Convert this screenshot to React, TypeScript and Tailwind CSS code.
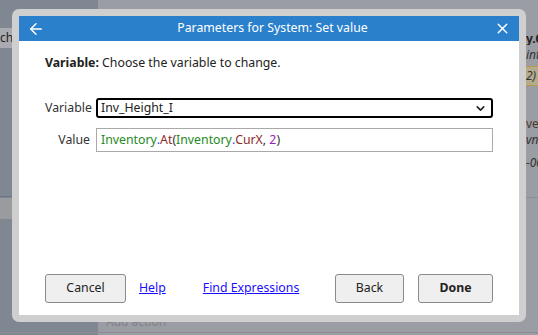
import { ArrowLeft, X, ChevronDown } from 'lucide-react';

const font = { fontFamily: '"Noto Sans", "Segoe UI", sans-serif' };

const Backdrop = () => (
  <div className="absolute inset-0 bg-[#9b9da4]">
    <div className="absolute left-0 top-0 w-[98px] h-full bg-[#7e8792]" />
    <div className="absolute left-0 top-[196px] w-[98px] h-px bg-[#6f7680]" />
    <div className="absolute left-0 top-[198px] w-[98px] h-[21px] bg-[#9a9b9f]" />
    <div className="absolute left-0 top-[28px] w-[14px] h-[20px] bg-[#a9abb0] text-[12px] text-[#222] leading-[20px] overflow-hidden">
      ch
    </div>
    <div className="absolute left-[526px] top-[33px] w-[12px] overflow-hidden text-[12px] font-bold text-[#222] leading-none">y.C</div>
    <div className="absolute left-[526px] top-[49px] w-[12px] overflow-hidden text-[12px] italic text-[#333] leading-none">int</div>
    <div className="absolute left-[526px] top-[66px] w-[12px] h-[20px] overflow-hidden bg-[#b3ab8c] border-y border-[#b39b4a] text-[12px] italic text-[#333] leading-[18px]">
      2)
    </div>
    <div className="absolute left-[526px] top-[118px] w-[12px] overflow-hidden text-[12px] text-[#4a3a2a] leading-none">ver</div>
    <div className="absolute left-[526px] top-[134px] w-[12px] overflow-hidden text-[12px] italic text-[#333] leading-none">vn'</div>
    <div className="absolute left-[526px] top-[157px] w-[12px] overflow-hidden text-[12px] italic text-[#333] leading-none">-00</div>
    <div className="absolute left-[526px] top-[197px] w-[12px] h-px bg-[#8d8f96]" />
    <div className="absolute left-[106px] top-[316px] text-[12px] text-[#7f8188] leading-none">Add action</div>
    <div className="absolute left-0 top-[332px] w-full h-px bg-[#8a8c92]" />
  </div>
);

const Boton = ({ children, bold }: { children: string; bold?: boolean }) => (
  <button
    className={`h-[29px] rounded-[3px] border border-[#8a8a8a] bg-[#efefef] text-[12.3px] text-[#222] ${
      bold ? 'font-bold w-[75px]' : 'w-[69px]'
    }`}>
    {children}
  </button>
);

export default function App() {
  return (
    <div className="relative w-[538px] h-[335px] overflow-hidden" style={font}>
      <Backdrop />

      <div className="absolute left-[12px] top-[9px] w-[514px] h-[313px] rounded-[7px] bg-[#cfcfcf] p-[7px]">
        <div className="flex flex-col w-full h-full bg-white">
          <div className="flex items-center justify-between h-[25px] bg-[#2b80cc] text-white px-[8px]">
            <ArrowLeft size={18} strokeWidth={2} />
            <span className="text-[12.3px] leading-none pl-[6px]">Parameters for System: Set value</span>
            <X size={17} strokeWidth={2} />
          </div>

          <div className="flex-1 flex flex-col px-[26px] pt-[13px] pb-[12px] text-[12.3px] text-[#222]">
            <p className="leading-[18px]">
              <span className="font-bold">Variable:</span> Choose the variable to change.
            </p>

            <div className="mt-[26px] grid grid-cols-[45px_1fr] gap-x-[6px] gap-y-[10px] items-center">
              <span className="text-right text-[#333]">Variable</span>
              <div className="flex items-center justify-between h-[20px] w-[397px] border-2 border-black rounded-[3px] pl-[3px] pr-[4px]">
                <span className="leading-none">Inv_Height_I</span>
                <ChevronDown size={13} strokeWidth={3} />
              </div>

              <span className="text-right text-[#333]">Value</span>
              <div className="flex items-center h-[24px] w-[397px] border border-[#a9a9a9] pl-[4px] leading-none">
                <span className="text-[#1e8a1e]">Inventory</span>
                <span className="text-[#2f4fd8]">.</span>
                <span className="text-[#8b2a2a]">At</span>
                <span className="text-[#333]">(</span>
                <span className="text-[#1e8a1e]">Inventory</span>
                <span className="text-[#2f4fd8]">.</span>
                <span className="text-[#8b2a2a]">CurX</span>
                <span className="text-[#333]">,&nbsp;</span>
                <span className="text-[#a020c0]">2</span>
                <span className="text-[#333]">)</span>
              </div>
            </div>

            <div className="mt-auto flex items-center">
              <button className="h-[29px] w-[81px] rounded-[3px] border border-[#8a8a8a] bg-[#efefef] text-[12.3px] text-[#222]">
                Cancel
              </button>
              <a className="ml-[13px] text-[#1a0dff] underline">Help</a>
              <a className="ml-[37px] text-[#1a0dff] underline">Find Expressions</a>
              <div className="ml-auto flex gap-[14px]">
                <Boton>Back</Boton>
                <Boton bold>Done</Boton>
              </div>
            </div>
          </div>
        </div>
      </div>
    </div>
  );
}
